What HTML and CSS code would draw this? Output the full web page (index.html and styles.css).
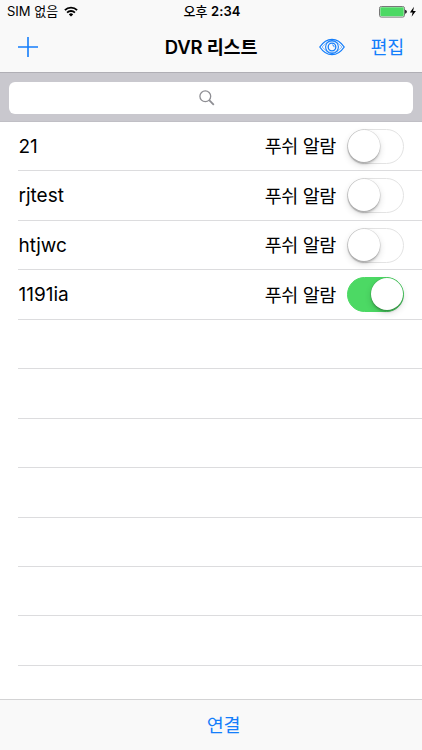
FILE: index.html
```html
<!DOCTYPE html>
<html lang="ko">
  <head>
    <meta charset="utf-8">
    <title>DVR 리스트</title>
    <link rel="stylesheet" href="styles.css">
  </head>

  <body>
    <header>
      <div class="status-bar">
        <div class="carrier">
          <span>SIM 없음</span>
          <svg class="wifi" width="14" height="11" viewBox="0 0 14 11">
            <g fill="none" stroke="#000" stroke-width="1.8">
              <path d="M0.9 4.2a8.6 8.6 0 0 1 12.2 0" />
              <path d="M3.1 6.6a5.5 5.5 0 0 1 7.8 0" />
            </g>
            <path d="M7 10.6L4.8 8.4a3.1 3.1 0 0 1 4.4 0z" />
          </svg>
        </div>
        <div class="time"><span>오후</span> 2:34</div>
        <div class="battery">
          <svg width="38" height="12" viewBox="0 0 38 12">
            <rect x="0.5" y="0.5" width="25" height="10.6" rx="1.8" fill="#fff" stroke="#777" />
            <rect x="1.3" y="1.3" width="23.4" height="9" rx="0.8" fill="#4cd964" />
            <path d="M26.2 3.8q1.6 0.4 1.6 2t-1.6 2z" />
            <path d="M35 0.8L30.9 6.5h2.7l-1 4.3 4.3-5.7h-2.8z" />
          </svg>
        </div>
      </div>

      <div class="nav-bar">
        <button class="add">
          <svg width="20" height="20" viewBox="0 0 20 20">
            <path d="M10 0v20M0 10h20" stroke="#147efb" stroke-width="1.6" />
          </svg>
        </button>
        <h1>DVR 리스트</h1>
        <div class="actions">
          <button class="watch">
            <svg width="26" height="18" viewBox="0 0 26 18" fill="none" stroke="#147efb">
              <path d="M0.8 9Q6 1.3 13 1.3T25.2 9Q20 16.7 13 16.7T0.8 9z" stroke-width="1.3" />
              <path d="M3 9Q7.5 3.2 13 3.2T23 9Q18.5 14.8 13 14.8T3 9z" stroke-width="0.5" />
              <circle cx="13" cy="9" r="6.4" stroke-width="1.1" />
              <circle cx="13" cy="9" r="3.8" stroke-width="1.3" />
              <path d="M13.2 6.8a2.2 2.2 0 0 1 1.9 2.4" stroke-width="0.9" />
            </svg>
          </button>
          <button class="edit">편집</button>
        </div>
      </div>
    </header>

    <div class="search-bar">
      <div class="search-field">
        <svg width="16" height="16" viewBox="0 0 16 16" fill="none" stroke="#8e8e93">
          <circle cx="6.3" cy="6.3" r="5.4" stroke-width="1.3" />
          <path d="M10.2 10.2l4.6 4.6" stroke-width="1.8" />
        </svg>
      </div>
    </div>

    <ul class="dvr-list">
      <li><span class="name">21</span><span class="label">푸쉬 알람</span><span class="switch"></span></li>
      <li><span class="name">rjtest</span><span class="label">푸쉬 알람</span><span class="switch"></span></li>
      <li><span class="name">htjwc</span><span class="label">푸쉬 알람</span><span class="switch"></span></li>
      <li><span class="name">1191ia</span><span class="label">푸쉬 알람</span><span class="switch on"></span></li>
      <li></li>
      <li></li>
      <li></li>
      <li></li>
      <li></li>
      <li></li>
      <li></li>
    </ul>

    <footer>
      <button class="connect">연결</button>
    </footer>
  </body>
</html>
```

FILE: styles.css
```css
* {
  box-sizing: border-box;
}

body {
  margin: 0;
  height: 750px;
  display: flex;
  flex-direction: column;
  overflow: hidden;
  font-family: Inter, "Noto Sans CJK KR", sans-serif;
  color: #000;
  background-color: #fff;
}

button {
  border: none;
  padding: 0;
  background: none;
  font: inherit;
  color: #147efb;
  cursor: pointer;
}

svg {
  display: block;
}

header {
  height: 72px;
  flex: none;
  background-color: #f9f9f9;
}

.status-bar {
  height: 23px;
  padding: 0 5px 0 7px;
  display: grid;
  grid-template-columns: 1fr auto 1fr;
  align-items: center;
  font-size: 13px;
  line-height: 23px;
}

.carrier {
  display: flex;
  align-items: center;
  gap: 6px;
}

.time {
  font-weight: 600;
  letter-spacing: 0.1px;
}

.time span {
  font-weight: 500;
}

.battery {
  justify-self: end;
}

.nav-bar {
  height: 48px;
  padding: 0 18px;
  display: grid;
  grid-template-columns: 1fr auto 1fr;
  align-items: center;
}

.add {
  justify-self: start;
}

h1 {
  margin: 0;
  font-size: 18.5px;
  font-weight: 600;
  line-height: 48px;
  letter-spacing: -0.2px;
}

.actions {
  display: flex;
  justify-content: flex-end;
  align-items: center;
  gap: 26px;
}

.edit,
.connect {
  font-size: 18.5px;
  line-height: 48px;
  letter-spacing: -0.3px;
}

.search-bar {
  height: 50px;
  flex: none;
  padding: 9px;
  background-color: #c9c8ce;
  border-top: 1px solid #b0afb5;
  border-bottom: 1px solid #c0bfc5;
}

.search-field {
  height: 32px;
  display: flex;
  align-items: center;
  justify-content: center;
  padding-right: 8px;
  background-color: #fff;
  border-radius: 6px;
}

.dvr-list {
  flex: 1;
  min-height: 0;
  margin: 0;
  padding: 0 0 0 18px;
  list-style: none;
}

.dvr-list li {
  height: 49.45px;
  padding-right: 18px;
  display: flex;
  align-items: center;
  border-bottom: 1px solid #dcdcde;
  font-size: 18.5px;
}

.name {
  flex: 1;
  padding-top: 1px;
  padding-left: 0.5px;
  font-size: 19px;
  line-height: 24px;
}

.label {
  margin-right: 11px;
  padding-bottom: 2px;
  letter-spacing: -0.4px;
}

.switch {
  width: 57px;
  height: 35px;
  display: flex;
  border: 1.5px solid #e3e3e3;
  border-radius: 18px;
}

.switch::before {
  content: "";
  width: 32px;
  height: 32px;
  border-radius: 50%;
  background-color: #fff;
  box-shadow: 0 0 0 0.5px rgba(0, 0, 0, 0.12), 0 2px 2px rgba(0, 0, 0, 0.2),
    0 3px 7px rgba(0, 0, 0, 0.14);
}

.switch.on {
  justify-content: flex-end;
  padding-right: 0.5px;
  border-color: #4cd964;
  background-color: #4cd964;
}

footer {
  height: 51px;
  flex: none;
  display: flex;
  align-items: center;
  justify-content: center;
  padding-left: 25px;
  background-color: #f9f9f9;
  border-top: 1px solid #d3d3d4;
}
```
